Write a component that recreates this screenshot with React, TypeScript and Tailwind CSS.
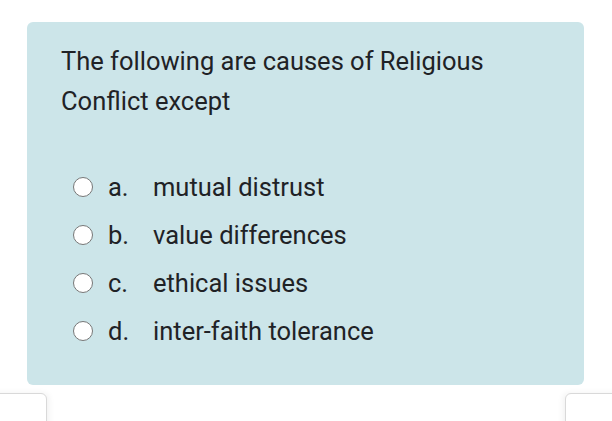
import React from 'react';

const options = [
  { key: 'a.', text: 'mutual distrust' },
  { key: 'b.', text: 'value differences' },
  { key: 'c.', text: 'ethical issues' },
  { key: 'd.', text: 'inter-faith tolerance' },
];

export default function App() {
  return (
    <div
      className="relative w-[612px] h-[421px] overflow-hidden bg-white text-[#1f2226]"
      style={{ fontFamily: 'Roboto, "Liberation Sans", sans-serif' }}
    >
      {/* Question card */}
      <div className="absolute left-[27px] top-[22px] w-[557px] h-[363px] rounded-[6px] bg-[#cce5e9] pl-[34px] pt-[19px]">
        <h2 className="text-[25.5px] leading-[40px] font-normal">
          The following are causes of Religious
          <br />
          Conflict except
        </h2>

        <ul className="mt-[52px] flex flex-col gap-[20px]">
          {options.map((o) => (
            <li key={o.key} className="flex items-center h-[28px] text-[25.5px]">
              <span className="ml-[12px] w-[20px] h-[20px] rounded-full bg-white border-[1.5px] border-[#777]" />
              <span className="ml-[15px] w-[45px]">{o.key}</span>
              <span>{o.text}</span>
            </li>
          ))}
        </ul>
      </div>

      {/* Next cards peeking in */}
      <div className="absolute left-[-10px] top-[393px] w-[57px] h-[60px] rounded-[6px] bg-white border border-[#d9d9d9] shadow-[2px_0_6px_rgba(0,0,0,0.06)]" />
      <div className="absolute left-[565px] top-[393px] w-[60px] h-[60px] rounded-[6px] bg-white border border-[#d9d9d9] shadow-[-2px_0_6px_rgba(0,0,0,0.06)]" />
    </div>
  );
}
